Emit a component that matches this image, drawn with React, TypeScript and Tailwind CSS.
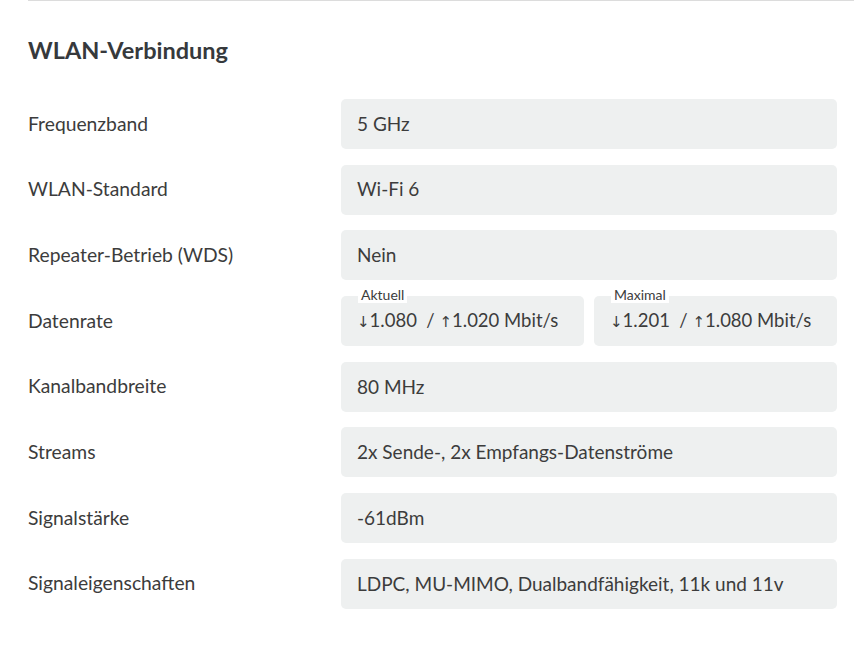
import React from 'react';

type Row = { label: string; value?: string };

const ROWS: Row[] = [
  { label: 'Frequenzband', value: '5 GHz' },
  { label: 'WLAN-Standard', value: 'Wi-Fi 6' },
  { label: 'Repeater-Betrieb (WDS)', value: 'Nein' },
  { label: 'Datenrate' },
  { label: 'Kanalbandbreite', value: '80 MHz' },
  { label: 'Streams', value: '2x Sende-, 2x Empfangs-Datenströme' },
  { label: 'Signalstärke', value: '-61dBm' },
  { label: 'Signaleigenschaften', value: 'LDPC, MU-MIMO, Dualbandfähigkeit, 11k und 11v' },
];

function RateBox({ title, down, up }: { title: string; down: string; up: string }) {
  return (
    <div className="relative flex-1 h-[50px] rounded-[5px] bg-[#eef0f0] flex items-center pl-[16px]">
      <span className="absolute left-[17px] -top-[9px] px-[3px] bg-white text-[14px] leading-[16px] text-[#3c3c3c]">
        {title}
      </span>
      <span className="text-[18.5px] text-[#3c3c3c] whitespace-pre">
        <span className="text-[15px] font-['DejaVu_Sans',sans-serif]">↓</span>{down}  / <span className="text-[15px] font-['DejaVu_Sans',sans-serif]">↑</span>{up} Mbit/s
      </span>
    </div>
  );
}

export default function App() {
  return (
    <div className="w-[854px] h-[646px] bg-white font-['Lato','Liberation_Sans',sans-serif] text-[#3c3c3c]">
      <div className="ml-[28px] border-t border-[#dcdcdc]" />
      <div className="pl-[28px] pr-[17px]">
        <h2 className="mt-[33px] text-[23.5px] font-bold leading-[32px] text-[#36393c]">WLAN-Verbindung</h2>
        <div className="mt-[33px] flex flex-col gap-[15.7px]">
          {ROWS.map(r => (
            <div key={r.label} className="flex items-center">
              <div className="w-[313px] text-[19.3px]">{r.label}</div>
              {r.value ? (
                <div className="flex-1 h-[50px] rounded-[5px] bg-[#eef0f0] flex items-center pl-[16px] text-[19px]">
                  {r.value}
                </div>
              ) : (
                <div className="flex-1 flex gap-[10px]">
                  <RateBox title="Aktuell" down="1.080" up="1.020" />
                  <RateBox title="Maximal" down="1.201" up="1.080" />
                </div>
              )}
            </div>
          ))}
        </div>
      </div>
    </div>
  );
}
